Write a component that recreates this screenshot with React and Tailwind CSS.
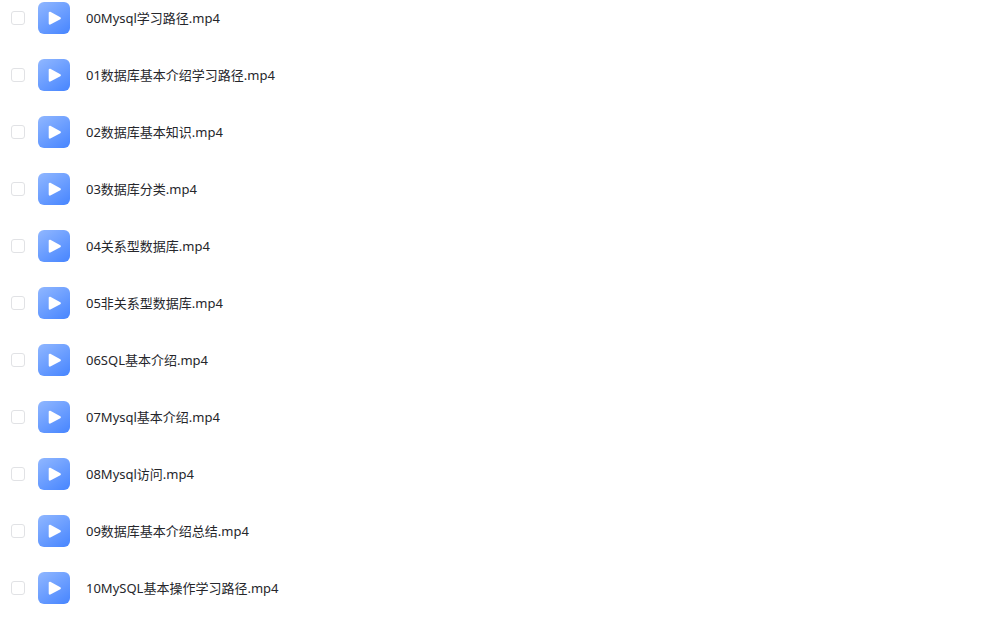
const files = [
    "00Mysql学习路径.mp4",
    "01数据库基本介绍学习路径.mp4",
    "02数据库基本知识.mp4",
    "03数据库分类.mp4",
    "04关系型数据库.mp4",
    "05非关系型数据库.mp4",
    "06SQL基本介绍.mp4",
    "07Mysql基本介绍.mp4",
    "08Mysql访问.mp4",
    "09数据库基本介绍总结.mp4",
    "10MySQL基本操作学习路径.mp4",
]

function VideoIcon() {
    return (
        <svg className="size-8 shrink-0" viewBox="0 0 32 32" aria-hidden="true">
            <defs>
                <linearGradient id="video-bg" x1="0.15" y1="0" x2="0.85" y2="1">
                    <stop offset="0" stopColor="#8cb4ff"/>
                    <stop offset="1" stopColor="#4b88ff"/>
                </linearGradient>
            </defs>
            <rect width="32" height="32" rx="6" fill="url(#video-bg)"/>
            <path
                d="M11.8 10.8v10.8L21.8 16.2z"
                fill="#fff"
                stroke="#fff"
                strokeWidth="2.2"
                strokeLinejoin="round"
            />
        </svg>
    )
}

function FileRow({name, id}) {
    return (
        <li className="flex h-8 items-center">
            <input
                id={id}
                type="checkbox"
                className="size-3.5 shrink-0 cursor-pointer appearance-none rounded-[3px] border border-[#e1e2e5] bg-white checked:border-[#4b88ff] checked:bg-[#4b88ff]"
            />
            <label htmlFor={id} className="ml-[13px] flex cursor-pointer items-center gap-4">
                <VideoIcon/>
                <span>{name}</span>
            </label>
        </li>
    )
}

export default function App() {
    return (
        <main className="bg-white pt-0.5 pl-[11px] font-['Noto_Sans','Noto_Sans_CJK_SC',sans-serif] text-[13px] leading-5 text-[#25262b]">
            <ul className="flex flex-col gap-[25px]">
                {files.map((name, index) => (
                    <FileRow key={name} name={name} id={`file-${index}`}/>
                ))}
            </ul>
        </main>
    )
}
